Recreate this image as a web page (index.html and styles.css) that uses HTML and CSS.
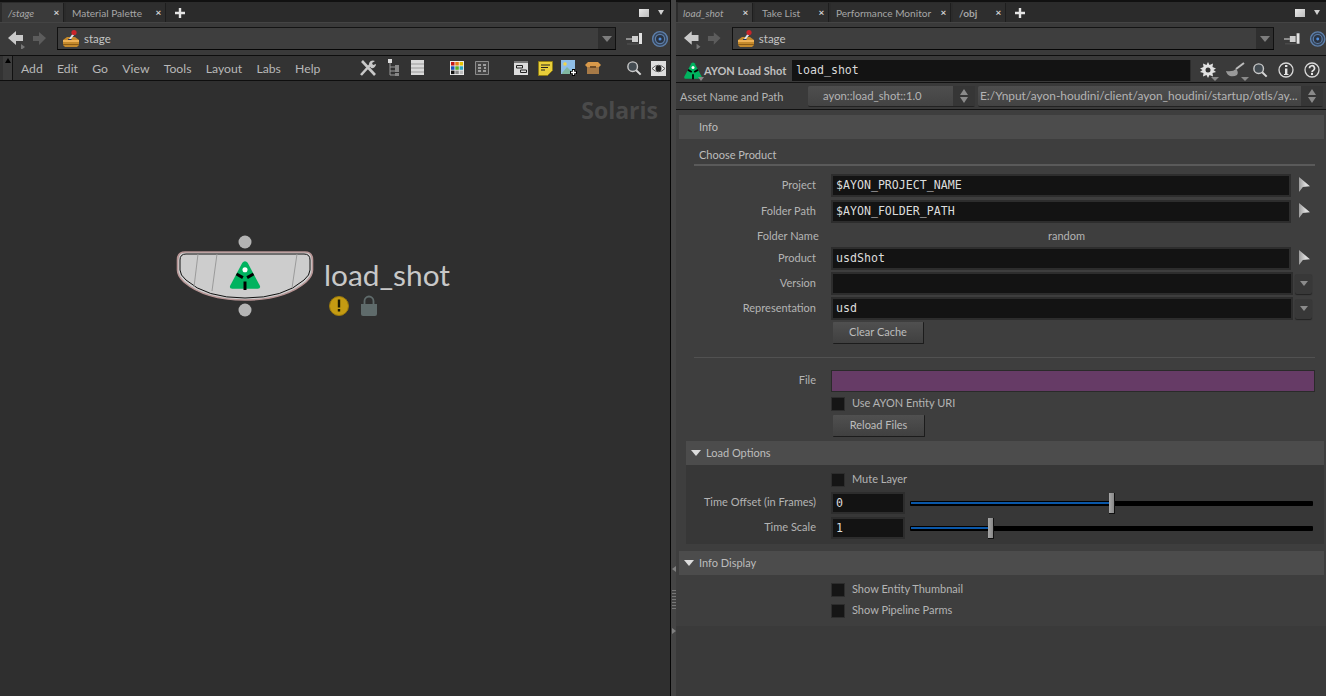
FILE: index.html
```html
<!DOCTYPE html>
<html lang="en">
  <head>
    <meta charset="UTF-8" />
    <meta name="viewport" content="width=device-width, initial-scale=1.0" />
    <title>load_shot - Solaris</title>
    <link rel="stylesheet" href="styles.css">
  </head>

  <body>
    <svg class="defs" width="0" height="0">
      <symbol id="i-back" viewBox="0 0 20 20">
        <path d="M1 9 9 2v4h7v6H9v4z" fill="#c9c9c9"/>
        <path d="M14 15l4 3-4 3z" fill="#777"/>
      </symbol>
      <symbol id="i-forward" viewBox="0 0 20 20">
        <path d="M15 9 8 3v4H2v5h6v4z" fill="#5c5c5c"/>
      </symbol>
      <symbol id="i-stage" viewBox="0 0 20 20">
        <path d="M2 11 6 8h8l4 3v5l-2 2H4l-2-2z" fill="#c58a2c"/>
        <path d="M2 11h16v2H2z" fill="#eeb257"/>
        <path d="M2 15h16v1H2z" fill="#8d5d17"/>
        <path d="M8 10 12 4l2 1-4 5z" fill="#dfe3ea"/>
        <circle cx="13" cy="3.5" r="2.6" fill="#c8242a"/>
        <path d="M7 10h4l-1 1H7z" fill="#24345f"/>
      </symbol>
      <symbol id="i-pin" viewBox="0 0 18 14">
        <path d="M0 7h6" stroke="#aaa" stroke-width="1.5"/>
        <path d="M6 4h6v6H6z" fill="#cfcfcf"/>
        <path d="M13 1h3v11h-3z" fill="#e2e2e2"/>
        <path d="M1 12h12" stroke="#555" stroke-width="1"/>
      </symbol>
      <symbol id="i-target" viewBox="0 0 18 18">
        <circle cx="9" cy="9" r="7.4" fill="#36465c" stroke="#5d7faa" stroke-width="1.4"/>
        <circle cx="9" cy="9" r="4.6" fill="#2b3442" stroke="#5d7faa" stroke-width="1.2"/>
        <circle cx="9" cy="9" r="1.5" fill="#4f8fe0"/>
      </symbol>
      <symbol id="i-search" viewBox="0 0 18 18">
        <circle cx="7.5" cy="7.5" r="5.4" fill="#444c52" stroke="#c9c9c9" stroke-width="1.6"/>
        <path d="M11.5 11.5 16.5 16.5" stroke="#d8d8d8" stroke-width="2.2"/>
      </symbol>
      <symbol id="i-ayon" viewBox="0 0 32 30">
        <path d="M16 2Q17.500 2 18.500 3.500L30 25Q31 28 28 28H4Q1 28 2 25L13.500 3.500Q14.500 2 16 2z" fill="#00b35f"/>
        <circle cx="16" cy="10" r="2.400" fill="#fff"/>
        <path d="M8 14 14 17.500M24 14 18 17.500M16 21V29" stroke="#000" stroke-width="2.800"/>
      </symbol>
      <symbol id="i-plus" viewBox="0 0 10 10">
        <path d="M5 0v10M0 5h10" stroke="#e4e4e4" stroke-width="2.400"/>
      </symbol>
    </svg>

    <div class="desk">
      <section class="pane">
        <div class="tabs">
          <div class="tab tab-on tab-stage"><em>/stage</em><i class="tab-x"></i></div>
          <div class="tab tab-palette"><span>Material Palette</span><i class="tab-x"></i></div>
          <svg class="tab-add" width="10" height="10"><use href="#i-plus"/></svg>
          <div class="tabs-end"><b class="win-box"></b><b class="win-arrow"></b></div>
        </div>
        <div class="pathbar">
          <svg class="nav-back" width="20" height="20"><use href="#i-back"/></svg>
          <svg class="nav-forward" width="20" height="20"><use href="#i-forward"/></svg>
          <div class="pathfield">
            <svg width="20" height="20"><use href="#i-stage"/></svg>
            <span>stage</span>
            <b class="pathdrop"></b>
          </div>
          <svg class="pin" width="18" height="14"><use href="#i-pin"/></svg>
          <svg class="target" width="18" height="18"><use href="#i-target"/></svg>
        </div>
        <div class="menubar">
          <div class="grabber"></div>
          <nav class="menu">
            <span>Add</span><span>Edit</span><span>Go</span><span>View</span><span>Tools</span><span>Layout</span><span>Labs</span><span>Help</span>
          </nav>
          <div class="tools">
            <svg class="tool t-wrench" width="18" height="18" viewBox="0 0 18 18">
              <path d="M2 16 12 5M3 2l13 14" stroke="#c8c8c8" stroke-width="2.600" fill="none"/>
              <path d="M10 6a4 4 0 0 1 6-4l-3 2 1 2 3-1a4 4 0 0 1-5 4z" fill="#c8c8c8"/>
            </svg>
            <svg class="tool t-tree" width="14" height="18" viewBox="0 0 14 18">
              <path d="M3 3v13h8M3 8h8M3 12h8" stroke="#9a9a9a" fill="none"/>
              <path d="M1 0h4v4H1z" fill="#ddd"/>
              <path d="M8 6h4v4H8zM8 10h4v3H8zM8 14h4v3H8z" fill="#888"/>
            </svg>
            <svg class="tool t-lines" width="14" height="16" viewBox="0 0 14 16">
              <path d="M0 0h13v15H0z" fill="#d9d9d9"/>
              <path d="M0 4h13M0 8h13M0 12h13" stroke="#999"/>
            </svg>
            <svg class="tool t-colors" width="14" height="14" viewBox="0 0 14 14">
              <path d="M0 0h14v14H0z" fill="#eee"/>
              <path d="M1 1h3.500v3.500H1z" fill="#c41616"/><path d="M5.300 1h3.500v3.500H5.300z" fill="#e97b12"/><path d="M9.600 1h3.500v3.500H9.600z" fill="#e6c400"/>
              <path d="M1 5.300h3.500v3.500H1z" fill="#1c4fb8"/><path d="M5.300 5.300h3.500v3.500H5.300z" fill="#58b026"/><path d="M9.600 5.300h3.500v3.500H9.600z" fill="#2aa6c0"/>
              <path d="M1 9.600h3.500v3.500H1z" fill="#111"/><path d="M5.300 9.600h3.500v3.500H5.300z" fill="#888"/><path d="M9.600 9.600h3.500v3.500H9.600z" fill="#bbb"/>
            </svg>
            <svg class="tool t-grid" width="14" height="14" viewBox="0 0 14 14">
              <path d="M.500.500h13v13H.500z" fill="#444" stroke="#8c8c8c"/>
              <path d="M3 4h3M8 4h3M3 7h3M9 7h2M3 10h3M8 10h3" stroke="#bbb" stroke-width="1.300"/>
            </svg>
            <svg class="tool t-netbox" width="15" height="15" viewBox="0 0 15 15">
              <path d="M0 0h14v14H0z" fill="#ddd"/>
              <path d="M0 0h14v2H0z" fill="#777"/>
              <path d="M2.500 4.500h6v2.500h-6zM6.500 9h6v2.500h-6z" fill="#ddd" stroke="#222"/>
            </svg>
            <svg class="tool t-sticky" width="15" height="15" viewBox="0 0 15 15">
              <path d="M.500.500h14v9l-5 5h-9z" fill="#e9cf3a" stroke="#8f7d14"/>
              <path d="M3 4h9M3 6.500h7M3 9h4" stroke="#222"/>
            </svg>
            <svg class="tool t-image" width="16" height="16" viewBox="0 0 16 16">
              <path d="M0 0h14v14H0z" fill="#8fbfe8"/>
              <path d="M1 13 6 7l4 4 2-2 2 2v3H1z" fill="#7fb7a0"/>
              <circle cx="4" cy="4" r="1.800" fill="#f1d44a"/>
              <path d="M12.500 9v7M9 12.500h7" stroke="#000" stroke-width="3"/>
              <path d="M12.500 10v5M10 12.500h5" stroke="#fff" stroke-width="1.300"/>
            </svg>
            <svg class="tool t-box" width="16" height="14" viewBox="0 0 16 14">
              <path d="M2 5h12v8H2z" fill="#a77a47"/>
              <path d="M0 4 3 1h10l3 3-2 2H2z" fill="#d8994a"/>
              <path d="M5 5h6v2H5z" fill="#6f4c26"/>
            </svg>
            <svg class="tool t-find" width="16" height="16"><use href="#i-search"/></svg>
            <svg class="tool t-eye" width="15" height="15" viewBox="0 0 15 15">
              <path d="M0 0h15v15H0z" fill="#ddd"/>
              <path d="M1 7.500Q7.500 1 14 7.500 7.500 14 1 7.500z" fill="#f4f4f4" stroke="#555"/>
              <circle cx="7.500" cy="7.500" r="3" fill="#222"/>
            </svg>
          </div>
        </div>
        <div class="canvas">
          <div class="watermark">Solaris</div>
          <svg class="node" width="220" height="100" viewBox="170 228 220 100">
            <circle cx="245" cy="242" r="6.500" fill="#b4b4b4"/>
            <circle cx="245" cy="310" r="6.500" fill="#b4b4b4"/>
            <path d="M185 252H305Q312.500 252 312.500 260V270Q312.500 276 306 282 285 300 245 300 205 300 184 282 177.500 276 177.500 270V260Q177.500 252 185 252z" fill="#cdcdcd" stroke="#b79595" stroke-width="1.600"/>
            <path d="M186 254H304Q310 254 310 260V270Q310 275 304 280 284 298 245 298 206 298 186 280 180 275 180 270V260Q180 254 186 254z" fill="none" stroke="#111" stroke-width="1"/>
            <path d="M198 254 194 287M217 254 212 291M297 254 292 288" stroke="#9a9a9a" stroke-width="1"/>
            <use href="#i-ayon" x="228" y="259" width="34" height="32"/>
            <circle cx="339" cy="306" r="9.500" fill="#c49b12" stroke="#9b7a0c"/>
            <path d="M337.800 299.500h2.400v8h-2.400zM337.800 309h2.400v2.600h-2.400z" fill="#1a1a00"/>
            <path d="M364.500 304v-3a4.500 4.500 0 0 1 9 0v3" fill="none" stroke="#5f6b6b" stroke-width="1.800"/>
            <path d="M361 304h16v10q0 2-2 2h-12q-2 0-2-2z" fill="#5f6b6b"/>
          </svg>
          <div class="node-name">load_shot</div>
        </div>
      </section>

      <div class="splitter">
        <b class="split-left"></b>
        <div class="split-dots"></div>
        <b class="split-right"></b>
      </div>

      <section class="pane">
        <div class="tabs">
          <div class="tab tab-on tab-shot"><em>load_shot</em><i class="tab-x"></i></div>
          <div class="tab tab-take"><span>Take List</span><i class="tab-x"></i></div>
          <div class="tab tab-perf"><span>Performance Monitor</span><i class="tab-x"></i></div>
          <div class="tab tab-obj"><strong>/obj</strong><i class="tab-x"></i></div>
          <svg class="tab-add" width="10" height="10"><use href="#i-plus"/></svg>
          <div class="tabs-end"><b class="win-box"></b><b class="win-arrow"></b></div>
        </div>
        <div class="pathbar">
          <svg class="nav-back" width="20" height="20"><use href="#i-back"/></svg>
          <svg class="nav-forward" width="20" height="20"><use href="#i-forward"/></svg>
          <div class="pathfield">
            <svg width="20" height="20"><use href="#i-stage"/></svg>
            <span>stage</span>
            <b class="pathdrop"></b>
          </div>
          <svg class="pin" width="18" height="14"><use href="#i-pin"/></svg>
          <svg class="target" width="18" height="18"><use href="#i-target"/></svg>
        </div>

        <div class="nodehead">
          <svg class="head-logo" width="20" height="19"><use href="#i-ayon"/></svg>
          <b class="head-mark"></b>
          <strong class="head-type">AYON Load Shot</strong>
          <div class="head-name">load_shot</div>
          <div class="head-icons">
            <div class="head-icon has-menu">
              <svg width="16" height="16" viewBox="0 0 16 16">
                <path d="M8 0 9.500 3 13 1.500 12.500 5 16 6.500 13.500 8 16 10 12.500 11 13 14.500 9.500 13 8 16 6.500 13 3 14.500 3.500 11 0 10 2.500 8 0 6.500 3.500 5 3 1.500 6.500 3z" fill="#e2e2e2"/>
                <circle cx="8" cy="8" r="2.500" fill="#333"/>
              </svg>
            </div>
            <div class="head-icon has-menu">
              <svg width="20" height="16" viewBox="0 0 20 16">
                <path d="M0 9q7 1 10-2 3 3 1 6-3 2-7 1-3-1-4-5z" fill="#9a9a9a"/>
                <path d="M10 7 18 1" stroke="#bcbcbc" stroke-width="2"/>
              </svg>
            </div>
            <div class="head-icon"><svg width="16" height="16"><use href="#i-search"/></svg></div>
            <div class="head-icon">
              <svg width="16" height="16" viewBox="0 0 16 16">
                <circle cx="8" cy="8" r="7" fill="none" stroke="#d8d8d8" stroke-width="1.300"/>
                <path d="M7 3h2.400v2H7zM7 6.500h2.400V12H10.500v1h-4.500v-1H7z" fill="#e4e4e4"/>
              </svg>
            </div>
            <div class="head-icon">
              <svg width="16" height="16" viewBox="0 0 16 16">
                <circle cx="8" cy="8" r="7" fill="none" stroke="#d8d8d8" stroke-width="1.300"/>
                <path d="M5.500 6.200a2.500 2.500 0 1 1 3.700 2.200Q8 9 8 10.200" fill="none" stroke="#e4e4e4" stroke-width="1.700"/>
                <path d="M7 11h2v2H7z" fill="#e4e4e4"/>
              </svg>
            </div>
          </div>
        </div>

        <div class="assetrow">
          <span class="asset-label">Asset Name and Path</span>
          <div class="select select-name"><span>ayon::load_shot::1.0</span><b class="spin"></b></div>
          <div class="select select-path"><span>E:/Ynput/ayon-houdini/client/ayon_houdini/startup/otls/ay...</span><b class="spin"></b></div>
        </div>

        <div class="panel">
          <div class="bar bar-info"><span>Info</span></div>
          <h3 class="group">Choose Product</h3>

          <div class="parm parm-26">
            <label>Project</label>
            <div class="parm-body"><div class="field">$AYON_PROJECT_NAME</div><b class="jump"></b></div>
          </div>
          <div class="parm parm-24">
            <label>Folder Path</label>
            <div class="parm-body"><div class="field">$AYON_FOLDER_PATH</div><b class="jump"></b></div>
          </div>
          <div class="parm parm-23 parm-text">
            <label class="label-wide">Folder Name</label>
            <div class="parm-body value">random</div>
          </div>
          <div class="parm parm-25">
            <label>Product</label>
            <div class="parm-body"><div class="field">usdShot</div><b class="jump"></b></div>
          </div>
          <div class="parm parm-25">
            <label>Version</label>
            <div class="parm-body"><div class="field"></div><b class="drop"></b></div>
          </div>
          <div class="parm parm-25">
            <label>Representation</label>
            <div class="parm-body"><div class="field">usd</div><b class="drop"></b></div>
          </div>
          <div class="parm parm-btn">
            <span></span>
            <div class="parm-body"><button class="btn">Clear Cache</button></div>
          </div>

          <div class="rule"></div>

          <div class="parm parm-file">
            <label>File</label>
            <div class="parm-body"><div class="field field-file"></div></div>
          </div>
          <div class="parm parm-check">
            <span></span>
            <div class="parm-body"><i class="check"></i><span class="check-label">Use AYON Entity URI</span></div>
          </div>
          <div class="parm parm-reload">
            <span></span>
            <div class="parm-body"><button class="btn btn-reload">Reload Files</button></div>
          </div>

          <div class="bar bar-load"><b class="open"></b><span>Load Options</span></div>
          <div class="folder">
            <div class="parm parm-mute">
              <span></span>
              <div class="parm-body"><i class="check"></i><span class="check-label">Mute Layer</span></div>
            </div>
            <div class="parm parm-time">
              <label>Time Offset (in Frames)</label>
              <div class="parm-body">
                <div class="field field-num">0</div>
                <div class="slider"><div class="slider-fill" style="width: 199px"></div><b class="knob" style="left: 199px"></b></div>
              </div>
            </div>
            <div class="parm parm-scale">
              <label>Time Scale</label>
              <div class="parm-body">
                <div class="field field-num">1</div>
                <div class="slider"><div class="slider-fill" style="width: 78px"></div><b class="knob" style="left: 78px"></b></div>
              </div>
            </div>
          </div>

          <div class="bar bar-display"><b class="open"></b><span>Info Display</span></div>
          <div class="parm parm-show">
            <span></span>
            <div class="parm-body"><i class="check"></i><span class="check-label">Show Entity Thumbnail</span></div>
          </div>
          <div class="parm parm-pipe">
            <span></span>
            <div class="parm-body"><i class="check"></i><span class="check-label">Show Pipeline Parms</span></div>
          </div>
        </div>
      </section>
    </div>
  </body>
</html>
```

FILE: styles.css
```css
* {
  margin: 0;
  padding: 0;
  box-sizing: border-box;
}

body {
  width: 1326px;
  height: 696px;
  overflow: hidden;
  background: #2f2f2f;
  color: #b4b4b4;
  font-family: "Lato", "Noto Sans", sans-serif;
  font-size: 11px;
}

.defs {
  position: absolute;
}

.desk {
  display: grid;
  grid-template-columns: 670px 6px 650px;
  height: 696px;
}

.pane {
  display: flex;
  flex-direction: column;
  height: 696px;
  min-width: 0;
  background: #3a3a3a;
}

/* tabs */
.tabs {
  display: flex;
  align-items: stretch;
  height: 22px;
  padding-top: 1px;
  background: #2b2b2b;
  border-top: 2px solid #111;
  position: relative;
}

.tab {
  display: flex;
  align-items: center;
  justify-content: space-between;
  height: 19px;
  margin-right: 2px;
  padding: 0 4px 0 6px;
  background: #2e2e2e;
  color: #a6a6a6;
  font-size: 10.1px;
  white-space: nowrap;
  border-right: 1px solid #1e1e1e;
}

.tab-on {
  background: #3a3a3a;
}

.tab em {
  font-style: italic;
}

.tab-stage { width: 62px; margin-left: 2px; margin-right: 2px; }
.tab-palette { width: 100px; }
.tab-shot { width: 75px; margin-left: 2px; padding-left: 5px; }
.tab-take { width: 74px; padding-left: 7px; }
.tab-perf { width: 120px; padding-left: 5px; }
.tab-obj { width: 53px; }

.tab-x {
  width: 5px;
  height: 5px;
  font-style: normal;
  font-weight: 700;
  font-size: 10px;
  line-height: 4px;
  color: #d4d4d4;
  text-indent: -0.5px;
}

.tab-x::before {
  content: "\00d7";
}

.tab-add {
  align-self: center;
  margin-left: 7px;
}

.tabs-end {
  margin-left: auto;
  display: flex;
  align-items: center;
  gap: 9px;
  padding-right: 6px;
}

.win-box {
  width: 10px;
  height: 8px;
  background: linear-gradient(135deg, #e8e8e8, #bdbdbd);
}

.win-arrow {
  width: 0;
  height: 0;
  border-left: 3.5px solid transparent;
  border-right: 3.5px solid transparent;
  border-top: 5px solid #d0d0d0;
}

/* path bar */
.pathbar {
  display: flex;
  align-items: center;
  height: 34px;
  padding: 0 0 1px 7px;
  background: #3a3a3a;
  border-top: 1px solid #444;
  border-bottom: 1px solid #0e0e0e;
}

.nav-forward {
  margin-left: 4px;
}

.pathfield {
  display: flex;
  align-items: center;
  gap: 3px;
  width: 559px;
  height: 23px;
  margin-left: 6px;
  padding-left: 3px;
  background: #3e3e3e;
  border: 1px solid #111;
  border-top: 1px solid #141414;
  border-right: 0;
  border-bottom: 1px solid #060606;
  color: #c4c4c4;
  font-size: 11.5px;
  position: relative;
}

.pathdrop {
  position: absolute;
  top: 0;
  right: 0;
  bottom: 0;
  width: 18px;
  background: #2f2f2f;
  border-right: 1px solid #111;
}

.pathdrop::after {
  content: "";
  position: absolute;
  left: 4px;
  top: 8px;
  border-left: 5px solid transparent;
  border-right: 5px solid transparent;
  border-top: 6px solid #7d7d7d;
}

.pin {
  margin-left: 10px;
}

.target {
  margin-left: 7px;
}

/* network menu */
.menubar {
  display: flex;
  align-items: center;
  height: 25px;
  background: #333;
  border-bottom: 1px solid #0e0e0e;
}

.grabber {
  width: 10px;
  height: 24px;
  margin-left: 3px;
  background: #3d3d3d;
  border-right: 1px solid #111;
  position: relative;
}

.grabber::before {
  content: "";
  position: absolute;
  left: 2px;
  top: 2px;
  border-left: 3px solid transparent;
  border-right: 3px solid transparent;
  border-bottom: 5px solid #000;
}

.menu {
  display: flex;
  gap: 14.3px;
  margin-left: 8px;
  font-size: 12.2px;
  color: #b8b8b8;
}

.tools {
  display: flex;
  align-items: center;
  flex: 1;
  height: 24px;
  margin-left: 39px;
}

.t-wrench { margin-right: 10px; }
.t-tree { margin-right: 10px; }
.t-lines { margin-right: 25px; }
.t-colors { margin-right: 11px; }
.t-grid { margin-right: 25px; }
.t-netbox { margin-right: 9px; }
.t-sticky { margin-right: 8px; }
.t-image { margin-right: 8px; }
.t-box { margin-right: 25px; }
.t-find { margin-right: 9px; }

.canvas {
  flex: 1;
  background: #2f2f2f;
  position: relative;
}

.watermark {
  position: absolute;
  top: 13px;
  right: 12px;
  color: #4a4a4a;
  font-family: "Open Sans", sans-serif;
  font-size: 23px;
  font-weight: 700;
}

.node {
  position: absolute;
  left: 170px;
  top: 147px;
}

.node-name {
  position: absolute;
  left: 324px;
  top: 174px;
  color: #c8c8c8;
  font-size: 29.8px;
  line-height: 40px;
}

.splitter {
  border-left: 1px solid #050505;
  background: #454545;
  position: relative;
}

.split-dots {
  position: absolute;
  left: 1px;
  top: 590px;
  width: 4px;
  height: 20px;
  background: repeating-linear-gradient(#777 0 1px, transparent 1px 3px);
}

.split-left,
.split-right {
  position: absolute;
  left: 1px;
  border-top: 3px solid transparent;
  border-bottom: 3px solid transparent;
}

.split-left { top: 566px; border-right: 4px solid #808080; }
.split-right { top: 628px; border-left: 4px solid #808080; }

/* node header */
.nodehead {
  display: flex;
  align-items: center;
  height: 27px;
  padding: 2px 0 0 7px;
  background: #3a3a3a;
  border-bottom: 1px solid #111;
  position: relative;
}

.head-mark {
  position: absolute;
  left: 22px;
  top: 21px;
  border-left: 3px solid transparent;
  border-right: 3px solid transparent;
  border-top: 4px solid #888;
}

.head-type {
  margin-left: 1px;
  width: 88px;
  color: #c0c0c0;
  font-size: 11px;
  white-space: nowrap;
}

.head-name {
  width: 399px;
  height: 21px;
  padding-left: 4px;
  background: #131313;
  border-right: 1px solid #2c2c2c;
  color: #d8d8d8;
  font-family: "DejaVu Sans Mono", monospace;
  font-size: 11.6px;
  line-height: 21px;
}

.head-icons {
  display: flex;
  align-items: center;
  gap: 9px;
  margin-left: 9px;
}

.head-icon {
  display: flex;
  position: relative;
}

.has-menu::after {
  content: "";
  position: absolute;
  right: -3px;
  bottom: -3px;
  border-left: 4px solid transparent;
  border-right: 4px solid transparent;
  border-top: 4px solid #8a8a8a;
}

.head-icon:nth-child(2) { margin-left: 1px; margin-right: -3px; }
.head-icon:nth-child(4) { margin-left: 1px; }
.head-icon:nth-child(5) { margin-left: 1px; }

.assetrow {
  display: flex;
  align-items: center;
  height: 27px;
  padding-left: 4px;
  background: #3a3a3a;
  border-bottom: 1px solid #111;
}

.asset-label {
  width: 128px;
  white-space: nowrap;
}

.select {
  display: flex;
  align-items: center;
  height: 21px;
  background: linear-gradient(#4e4e4e, #434343);
  border-bottom: 1px solid #222;
  border-radius: 2px;
  position: relative;
  white-space: nowrap;
}

.select-name {
  width: 167px;
  padding-left: 15px;
  font-size: 11.3px;
}

.select-path {
  width: 345px;
  margin-left: 3px;
  padding-left: 2px;
  font-size: 11.9px;
}

.spin {
  position: absolute;
  right: 0;
  top: 0;
  bottom: 0;
  width: 22px;
  background: #363636;
}

.spin::before,
.spin::after {
  content: "";
  position: absolute;
  left: 7px;
  border-left: 4px solid transparent;
  border-right: 4px solid transparent;
}

.spin::before { top: 3px; border-bottom: 6px solid #8a8a8a; }
.spin::after { top: 11px; border-top: 6px solid #8a8a8a; }

/* parameters */
.panel {
  height: 516px;
  padding-top: 5px;
  background: #3e3e3e;
}

.bar {
  display: flex;
  align-items: center;
  height: 24px;
  margin: 0 2px 0 3px;
  padding-bottom: 2px;
  background: #4c4c4c;
  color: #bcbcbc;
}

.bar-info span,
.bar-display span {
  margin-left: 20px;
}

.bar-display {
  margin-top: 7px;
  position: relative;
}

.bar-load {
  margin-left: 10px;
  position: relative;
}

.bar-load span {
  margin-left: 20px;
}

.open {
  position: absolute;
  left: 5px;
  top: 9px;
  border-left: 5px solid transparent;
  border-right: 5px solid transparent;
  border-top: 6px solid #ddd;
}

.group {
  height: 27px;
  margin: 0 11px 8px 18px;
  padding: 9px 0 0 5px;
  border-bottom: 2px solid #5a5a5a;
  font-size: 11px;
  font-weight: 400;
  color: #bcbcbc;
}

.parm {
  display: grid;
  grid-template-columns: 140px 1fr;
  column-gap: 15px;
  align-items: start;
  padding-right: 11px;
}

.parm label {
  line-height: 21px;
  text-align: right;
  white-space: nowrap;
}

.parm-26 { height: 26px; }
.parm-24 { height: 24px; }
.parm-23 { height: 23px; }
.parm-25 { height: 25px; }
.parm-btn { height: 35px; }
.parm-file { height: 27px; }
.parm-check { height: 18px; }
.parm-reload { height: 26px; }
.parm-mute { height: 19px; }
.parm-time { height: 25px; }
.parm-scale { height: 27px; }
.parm-show { height: 21px; margin-top: 8px; }
.parm-pipe { height: 21px; }

.parm-file label,
.parm-time label,
.parm-scale label {
  line-height: 20px;
}

.parm-body {
  display: flex;
  align-items: center;
  gap: 2px;
  min-width: 0;
}

.parm .label-wide {
  margin-right: -12px;
  padding-left: 81px;
  text-align: left;
  line-height: 23px;
}

.value {
  display: block;
  padding-left: 217px;
  line-height: 23px;
}

.field {
  flex: 1;
  height: 23px;
  padding-left: 3px;
  background: #131313;
  border: 2px solid #2d2d2d;
  color: #dcdcdc;
  font-family: "DejaVu Sans Mono", monospace;
  font-size: 11.6px;
  line-height: 19px;
}

.field-file {
  height: 22px;
  background: #663b66;
  border: 1px solid #2a2a2a;
}

.field-num {
  flex: none;
  width: 74px;
  height: 22px;
  line-height: 18px;
}

.jump {
  width: 22px;
  height: 23px;
  position: relative;
}

.jump::after {
  content: "";
  position: absolute;
  left: 6px;
  top: 3px;
  width: 11px;
  height: 15px;
  background: linear-gradient(90deg, #9c9c9c, #dcdcdc 60%);
  clip-path: polygon(0 0, 100% 62%, 35% 66%, 0 100%);
}

.drop {
  width: 17px;
  height: 20px;
  margin-right: 3px;
  background: #383838;
  box-shadow: 0 1px 1px #222;
  border-radius: 2px;
  position: relative;
}

.drop::after {
  content: "";
  position: absolute;
  left: 5px;
  top: 7px;
  border-left: 4px solid transparent;
  border-right: 4px solid transparent;
  border-top: 5px solid #8c8c8c;
}

.btn {
  width: 91px;
  height: 22px;
  margin-left: 2px;
  padding-bottom: 2px;
  background: linear-gradient(#505050, #404040);
  border: 0;
  border-bottom: 1px solid #1c1c1c;
  border-right: 1px solid #1c1c1c;
  border-radius: 1px;
  color: #bcbcbc;
  font-family: inherit;
  font-size: 11px;
}

.btn-reload {
  width: 92px;
}

.rule {
  height: 1px;
  margin: 0 11px 12px 18px;
  background: #515151;
}

.check {
  flex: none;
  width: 14px;
  height: 14px;
  background: #151515;
  border: 1px solid #2d2d2d;
}

.check-label {
  height: 14px;
  margin-left: 5px;
  line-height: 12px;
  white-space: nowrap;
}

.folder {
  height: 79px;
  margin: 0 2px 0 10px;
  padding-top: 8px;
  background: #373737;
}

.folder .parm {
  grid-template-columns: 130px 1fr;
  padding-right: 9px;
}

.slider {
  flex: 1;
  height: 5px;
  margin: 0 2px 0 3px;
  background: #000;
  border-radius: 1px;
  position: relative;
}

.slider-fill {
  position: absolute;
  left: 1px;
  top: 1px;
  height: 2px;
  background: #0a57a8;
}

.knob {
  position: absolute;
  top: -8px;
  width: 6px;
  height: 21px;
  background: linear-gradient(90deg, #a8a8a8, #888);
  border: 1px solid #111;
  border-width: 0 1px 1px 0;
}
```
